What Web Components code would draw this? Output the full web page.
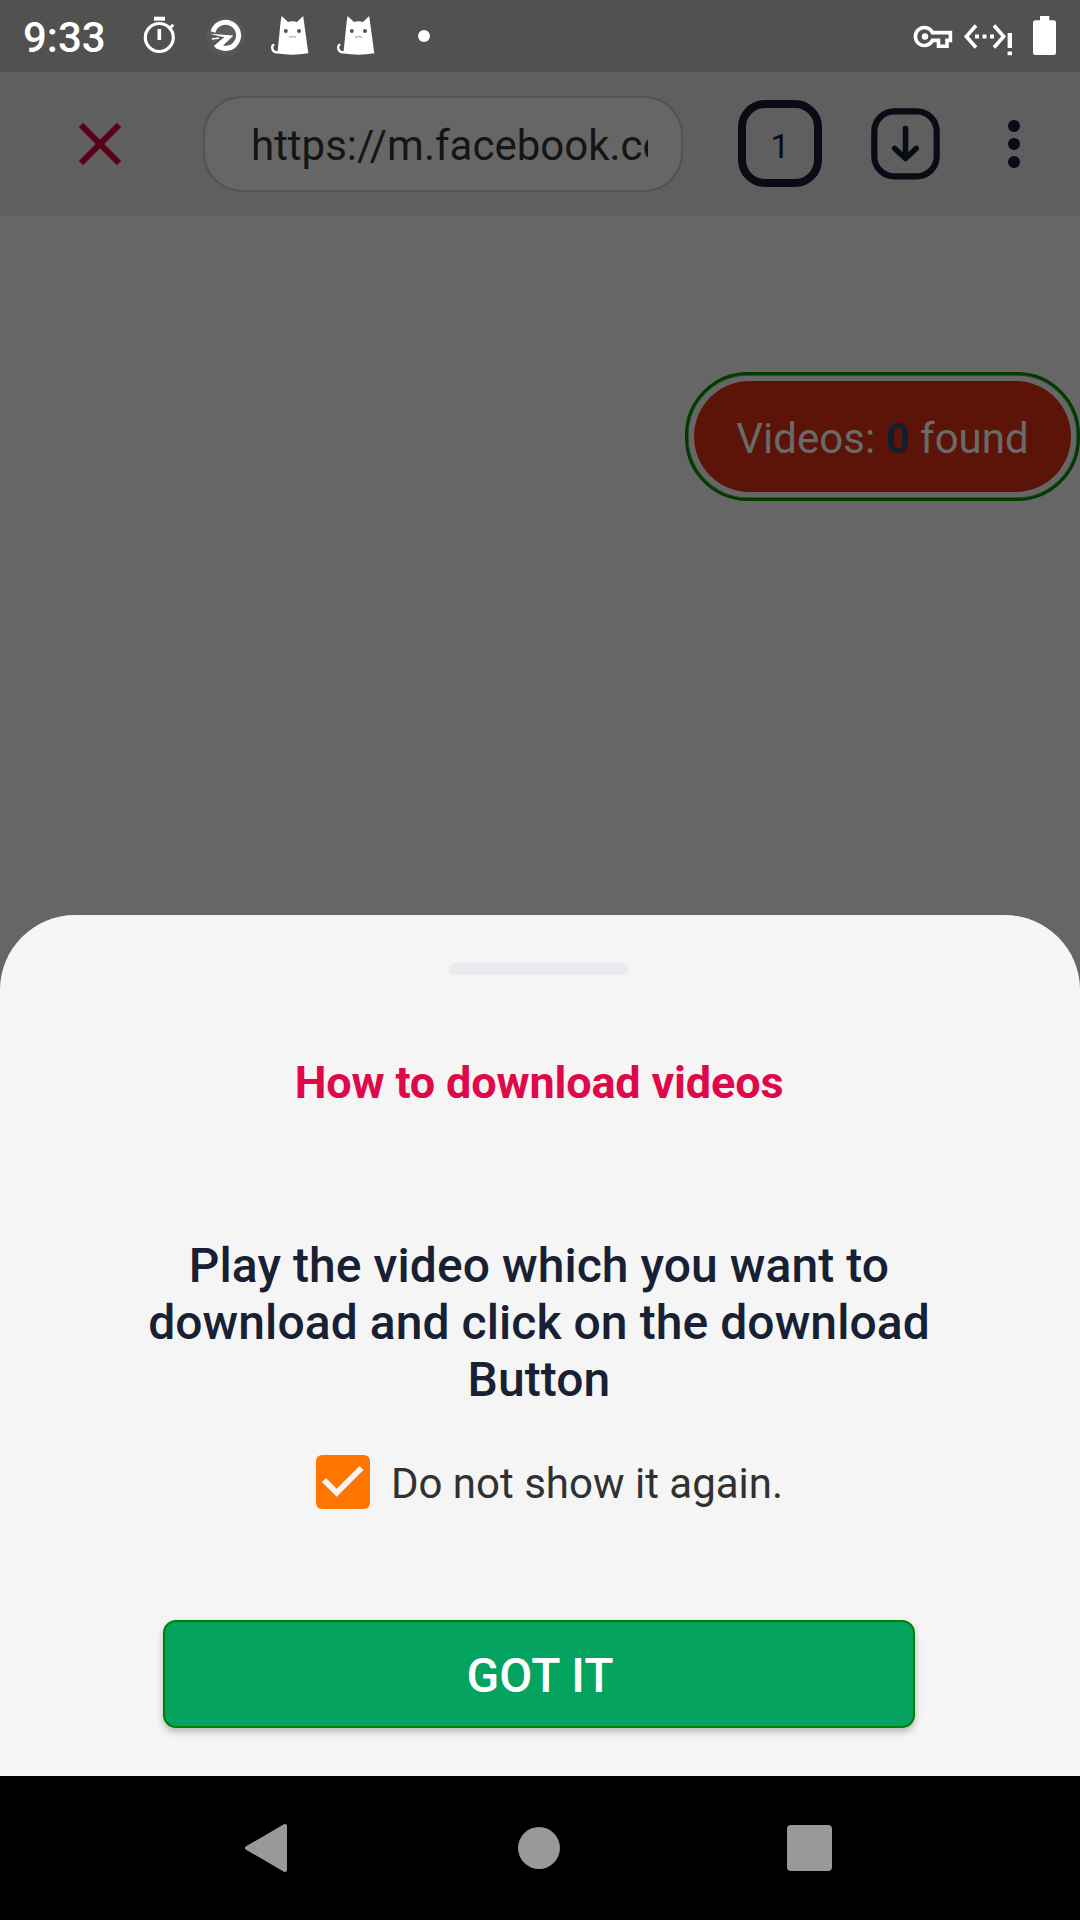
<!DOCTYPE html>
<html lang="en">
<head>
<meta charset="utf-8">
<title>Browser</title>
<style>
html,body{margin:0;padding:0;background:#666}
body{font-family:Roboto,"Noto Sans",sans-serif;width:1080px;height:1920px;overflow:hidden}
</style>
</head>
<body>
<phone-screen>
  <status-bar slot="status" time="9:33"></status-bar>
  <browser-toolbar slot="toolbar" url="https://m.facebook.com/" tabs="1"></browser-toolbar>
  <video-pill slot="page" count="0"></video-pill>
  <bottom-sheet slot="sheet">
    <span slot="title">How to download videos</span>
    <span slot="message">Play the video which you want to download and click on the download Button</span>
    <check-row slot="option">Do not show it again.</check-row>
    <action-button slot="action">GOT IT</action-button>
  </bottom-sheet>
  <nav-bar slot="nav"></nav-bar>
</phone-screen>
<script>
const define = (name, html) => customElements.define(name, class extends HTMLElement {
  constructor() {
    super();
    this.attachShadow({ mode: 'open' }).innerHTML =
      '<style>*{box-sizing:border-box}svg{display:block;flex:none}</style>' +
      html.replace(/\{(\w+)\}/g, (m, k) => this.getAttribute(k) ?? '');
  }
});

define('phone-screen', `
<style>
:host{display:flex;flex-direction:column;width:1080px;height:1920px;background:#666;overflow:hidden}
.page{flex:1;display:flex;justify-content:flex-end;align-items:flex-start;padding-top:156px}
</style>
<slot name="status"></slot><slot name="toolbar"></slot>
<div class="page"><slot name="page"></slot></div>
<slot name="sheet"></slot><slot name="nav"></slot>`);

define('cat-icon', `
<style>:host{display:block}</style>
<svg width="40" height="42" viewBox="0 0 40 42">
<path fill="#fff" d="M11.6 1 L18 6.9 Q22 5.8 27 6.9 L33.2 1 L34 7 L38.3 38.3 Q23 41 7.5 38.6 Q1 38.5 1 32.5 Q1 29 4 28.8 L4.8 30 Q2.8 31 3.6 34 Q4.5 36.3 7.6 36.3 L10.6 7 Z"/>
<circle cx="15.8" cy="16" r="2" fill="#555"/><circle cx="29" cy="16" r="2" fill="#555"/>
<path d="M19 22.3q3.5-1.4 7 0" fill="none" stroke="#bbb" stroke-width="1.5"/>
</svg>`);

define('status-bar', `
<style>
:host{display:flex;height:72px;flex:none;background:#515151;align-items:flex-start;color:#fff}
time{font-size:42px;font-weight:500;line-height:50px;margin:13px 0 0 23px;width:116px;white-space:nowrap}
.n{display:flex;flex:1;align-items:flex-start}
</style>
<time>{time}</time>
<div class="n">
<svg width="66" height="72" viewBox="0 0 66 72"><g fill="none" stroke="#fff"><circle cx="20.3" cy="37.5" r="14" stroke-width="3.2"/><path d="M15 18.7h11" stroke-width="4"/><path d="M20.3 29v11" stroke-width="3.6"/><path d="M31 28l3.3-3.3" stroke-width="3"/></g></svg>
<svg width="64" height="72" viewBox="0 0 64 72"><defs><radialGradient id="g"><stop offset=".5" stop-color="#5e5e5e"/><stop offset="1" stop-color="#515151"/></radialGradient></defs><circle cx="20.5" cy="36" r="22" fill="url(#g)"/><path fill="none" stroke="#fff" stroke-width="5" d="M8 32A13 13 0 1 1 11.500 44.700"/><path fill="#fff" d="M5 33.800L28.500 35.500L17 46.500L31 46L25 50L12 49L9 46L18 37.500Z"/><path d="M6 35.500l12 2.200-9 6.300" fill="none" stroke="#515151" stroke-width="1.2"/><path d="M7 39l7-1" stroke="#fff" stroke-width="1.500"/></svg>
<cat-icon style="margin:15px 0 0 1px"></cat-icon>
<cat-icon style="margin:15px 0 0 26px"></cat-icon>
<svg style="margin-left:27px" width="60" height="72" viewBox="0 0 60 72"><circle cx="21" cy="36" r="6" fill="#fff"/></svg>
</div>
<svg width="180" height="72" viewBox="900 0 180 72">
<g fill="none" stroke="#fff" stroke-width="3.600"><path d="M932.500 32.600A9 9 0 1 0 932.500 40.400H938.500V46.200H947V40.400H950.400V32.600Z"/></g><circle cx="925" cy="36.500" r="3.200" fill="#fff"/>
<g fill="none" stroke="#fff" stroke-width="3.600"><path d="M976 25.500L966.300 36.500L976 47.500M994 25.500L1003.700 36.500L994 47.500"/></g>
<path fill="#fff" d="M975 34.600h4v4h-4zM982.500 34.600h4v4h-4zM990 34.600h4v4h-4zM1007.600 33h4.400v15h-4.400zM1007.600 51.500h4.400v3.700h-4.400zM1040 16h9.300v4.200h4.200q2.500 0 2.500 2.500v29.700q0 2.500-2.500 2.500h-18q-2.500 0-2.500-2.500v-29.700q0-2.500 2.500-2.500h4.500z"/>
</svg>`);

define('browser-toolbar', `
<style>
:host{display:flex;height:144px;flex:none;background:#5f5f5f;align-items:center;color:#151515}
.close{margin-left:79px}
.url{margin-left:82px;width:480px;height:96px;border:2px solid #525252;border-radius:39px;background:#666;padding:3px 33px 0 46px;display:flex;align-items:center}
.url span{font-size:42px;line-height:54px;white-space:nowrap;overflow:hidden;width:100%;display:block}
.tab{margin:0 0 1px 55px;width:84px;height:87px;border:8px solid #090c15;border-radius:27px;display:flex;align-items:center;justify-content:center;font-size:34px;padding-top:4px;color:#090c15}
.dl{margin-left:49px}.dots{margin-left:68px}
</style>
<svg class="close" width="42" height="42" viewBox="0 0 42 42"><path d="M2 2L40 40M40 2L2 40" stroke="#5b0019" stroke-width="6"/></svg>
<div class="url"><span>{url}</span></div>
<div class="tab">{tabs}</div>
<svg class="dl" width="69" height="72" viewBox="0 0 69 72"><g fill="none" stroke="#090c15" stroke-width="6.200" stroke-linecap="round" stroke-linejoin="round"><rect x="3.300" y="3.400" width="62.400" height="65" rx="20"/><path d="M34.500 20.500V50M23.700 40.500L34.500 50.500L45.200 40.500" stroke-width="5.600"/></g></svg>
<svg class="dots" width="12" height="48" viewBox="0 0 12 48"><g fill="#090c15"><circle cx="6" cy="6" r="6"/><circle cx="6" cy="24" r="6"/><circle cx="6" cy="42" r="6"/></g></svg>`);

define('video-pill', `
<style>
:host{display:block;width:395px;height:129px;border:3px solid #003a00;border-radius:63px;padding:6px;box-sizing:border-box;box-shadow:inset 0 0 0 .5px #003a00}
div{height:111px;width:377px;border-radius:56px;background:#5d1408;display:flex;align-items:center;justify-content:center;color:#6a6a6a;font-size:42px;padding-top:3px;white-space:pre}
b{color:#131f2c}
</style>
<div>Videos: <b>{count}</b> found</div>`);

define('bottom-sheet', `
<style>
:host{display:flex;flex-direction:column;align-items:center;flex:none;box-sizing:border-box;height:861px;padding-right:2px;background:#f5f5f5;border-radius:75px 75px 0 0}
i{width:180px;height:12px;border-radius:6px;background:#eaebef;margin-top:48px}
h1{margin:81px 0 0;font-size:45px;line-height:54px;font-weight:700;letter-spacing:-.17px;color:#df0849}
p{margin:127px 0 0;width:820px;text-align:center;font-size:48px;line-height:57px;font-weight:500;letter-spacing:.07px;color:#182133}
.o{margin-top:47px;height:54px;padding-left:21px}
.a{margin-top:111px}
</style>
<i></i><h1><slot name="title"></slot></h1><p><slot name="message"></slot></p>
<div class="o"><slot name="option"></slot></div><div class="a"><slot name="action"></slot></div>`);

define('check-row', `
<style>
:host{display:flex;align-items:center;gap:21px;color:#313131;font-size:42px;white-space:nowrap}
span{line-height:54px;padding-top:2px;height:54px}
</style>
<svg width="54" height="54" viewBox="0 0 54 54"><rect width="54" height="54" rx="6" fill="#ff7500"/><path d="M8 25L20.700 37.700L45.500 13" fill="none" stroke="#f5f5f5" stroke-width="5.700"/></svg>
<span><slot></slot></span>`);

define('action-button', `
<style>
:host{display:flex;align-items:center;justify-content:center;box-sizing:border-box;width:752px;height:108px;border:2px solid #008000;border-radius:13px;background:#04a35f;color:#fff;font-size:48px;font-weight:500;padding:3px 0 0 2px;box-shadow:0 4px 7px rgba(0,0,0,.25)}
</style><slot></slot>`);

define('nav-bar', `
<style>:host{display:flex;height:144px;flex:none;background:#000;align-items:center;padding-left:244px}</style>
<svg width="44" height="50" viewBox="0 0 44 50"><path d="M3 25L41 3V47Z" fill="#999" stroke="#999" stroke-width="4" stroke-linejoin="round"/></svg>
<svg style="margin-left:230px" width="42" height="42"><circle cx="21" cy="21" r="21" fill="#999"/></svg>
<svg style="margin-left:227px" width="45" height="46"><rect width="45" height="46" rx="4" fill="#999"/></svg>`);
</script>
</body>
</html>
